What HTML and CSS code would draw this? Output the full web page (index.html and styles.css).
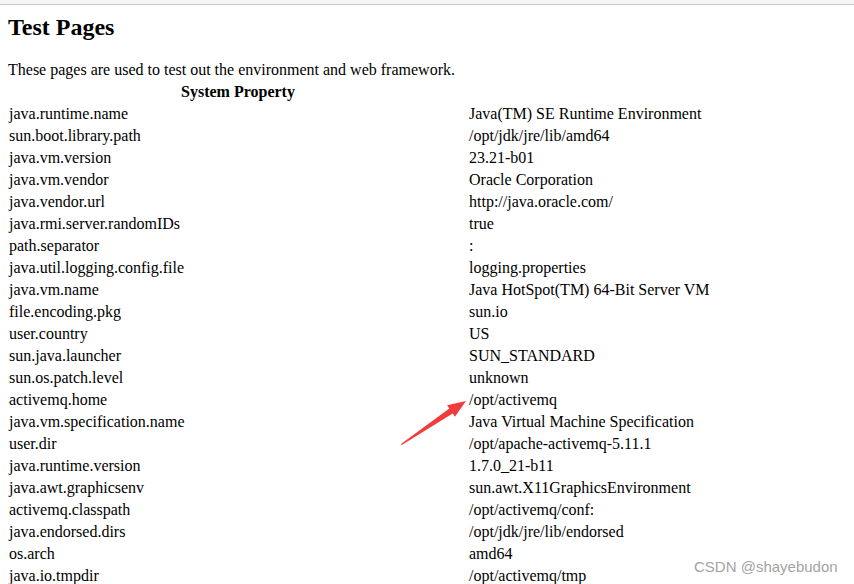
FILE: index.html
```html
<!DOCTYPE html>
<html lang="en">
<head>
    <meta charset="UTF-8">
    <meta name="viewport" content="width=device-width, initial-scale=1.0">
    <title>Test Pages</title>
    <link rel="stylesheet" href="styles.css">
</head>
<body>
    <div class="topbar"></div>
    <div class="page">
        <h1>Test Pages</h1>
        <p class="intro">These pages are used to test out the environment and web framework.</p>
        <table class="props">
            <tr><th class="key">System Property</th><th></th></tr>
            <tr><td class="key">java.runtime.name</td><td>Java(TM) SE Runtime Environment</td></tr>
            <tr><td class="key">sun.boot.library.path</td><td>/opt/jdk/jre/lib/amd64</td></tr>
            <tr><td class="key">java.vm.version</td><td>23.21-b01</td></tr>
            <tr><td class="key">java.vm.vendor</td><td>Oracle Corporation</td></tr>
            <tr><td class="key">java.vendor.url</td><td>http://java.oracle.com/</td></tr>
            <tr><td class="key">java.rmi.server.randomIDs</td><td>true</td></tr>
            <tr><td class="key">path.separator</td><td>:</td></tr>
            <tr><td class="key">java.util.logging.config.file</td><td>logging.properties</td></tr>
            <tr><td class="key">java.vm.name</td><td>Java HotSpot(TM) 64-Bit Server VM</td></tr>
            <tr><td class="key">file.encoding.pkg</td><td>sun.io</td></tr>
            <tr><td class="key">user.country</td><td>US</td></tr>
            <tr><td class="key">sun.java.launcher</td><td>SUN_STANDARD</td></tr>
            <tr><td class="key">sun.os.patch.level</td><td>unknown</td></tr>
            <tr><td class="key">activemq.home</td><td>/opt/activemq</td></tr>
            <tr><td class="key">java.vm.specification.name</td><td>Java Virtual Machine Specification</td></tr>
            <tr><td class="key">user.dir</td><td>/opt/apache-activemq-5.11.1</td></tr>
            <tr><td class="key">java.runtime.version</td><td>1.7.0_21-b11</td></tr>
            <tr><td class="key">java.awt.graphicsenv</td><td>sun.awt.X11GraphicsEnvironment</td></tr>
            <tr><td class="key">activemq.classpath</td><td>/opt/activemq/conf:</td></tr>
            <tr><td class="key">java.endorsed.dirs</td><td>/opt/jdk/jre/lib/endorsed</td></tr>
            <tr><td class="key">os.arch</td><td>amd64</td></tr>
            <tr><td class="key">java.io.tmpdir</td><td>/opt/activemq/tmp</td></tr>
        </table>
    </div>

    <svg class="arrow" width="854" height="584" viewBox="0 0 854 584">
        <polygon points="401,444 449.3,408.5 447.1,405.2 466,401 454.9,416.8 452.7,413.5 401.8,445" fill="#f03c3c"/>
    </svg>
    <div class="watermark">CSDN @shayebudon</div>
</body>
</html>
```

FILE: styles.css
```css
html {
    overflow: hidden;
}
body {
    margin: 0;
    font-family: "Liberation Serif", "Times New Roman", serif;
    font-size: 16px;
    color: #000;
    background-color: #fff;
    position: relative;
}
.topbar {
    height: 4px;
    background-color: #f5f5f7;
    border-bottom: 1px solid #c8c8c8;
}
.page {
    padding: 0 8px;
}
h1 {
    font-size: 24px;
    line-height: 27px;
    margin: 9px 0 20px;
}
.intro {
    margin: 0;
    line-height: 18px;
}
.props {
    width: 100%;
    table-layout: fixed;
    border-spacing: 0;
    margin-top: 2px;
}
.props th,
.props td {
    padding: 2px 1px;
    line-height: 18px;
    text-align: left;
    white-space: nowrap;
}
.props th {
    text-align: center;
}
.props .key {
    width: 458px;
}
.arrow {
    position: absolute;
    top: 0;
    left: 0;
}
.watermark {
    position: absolute;
    left: 694px;
    top: 558px;
    font-family: "Liberation Sans", Arial, sans-serif;
    font-size: 15px;
    line-height: 17px;
    color: #a3a3a3;
}
```
